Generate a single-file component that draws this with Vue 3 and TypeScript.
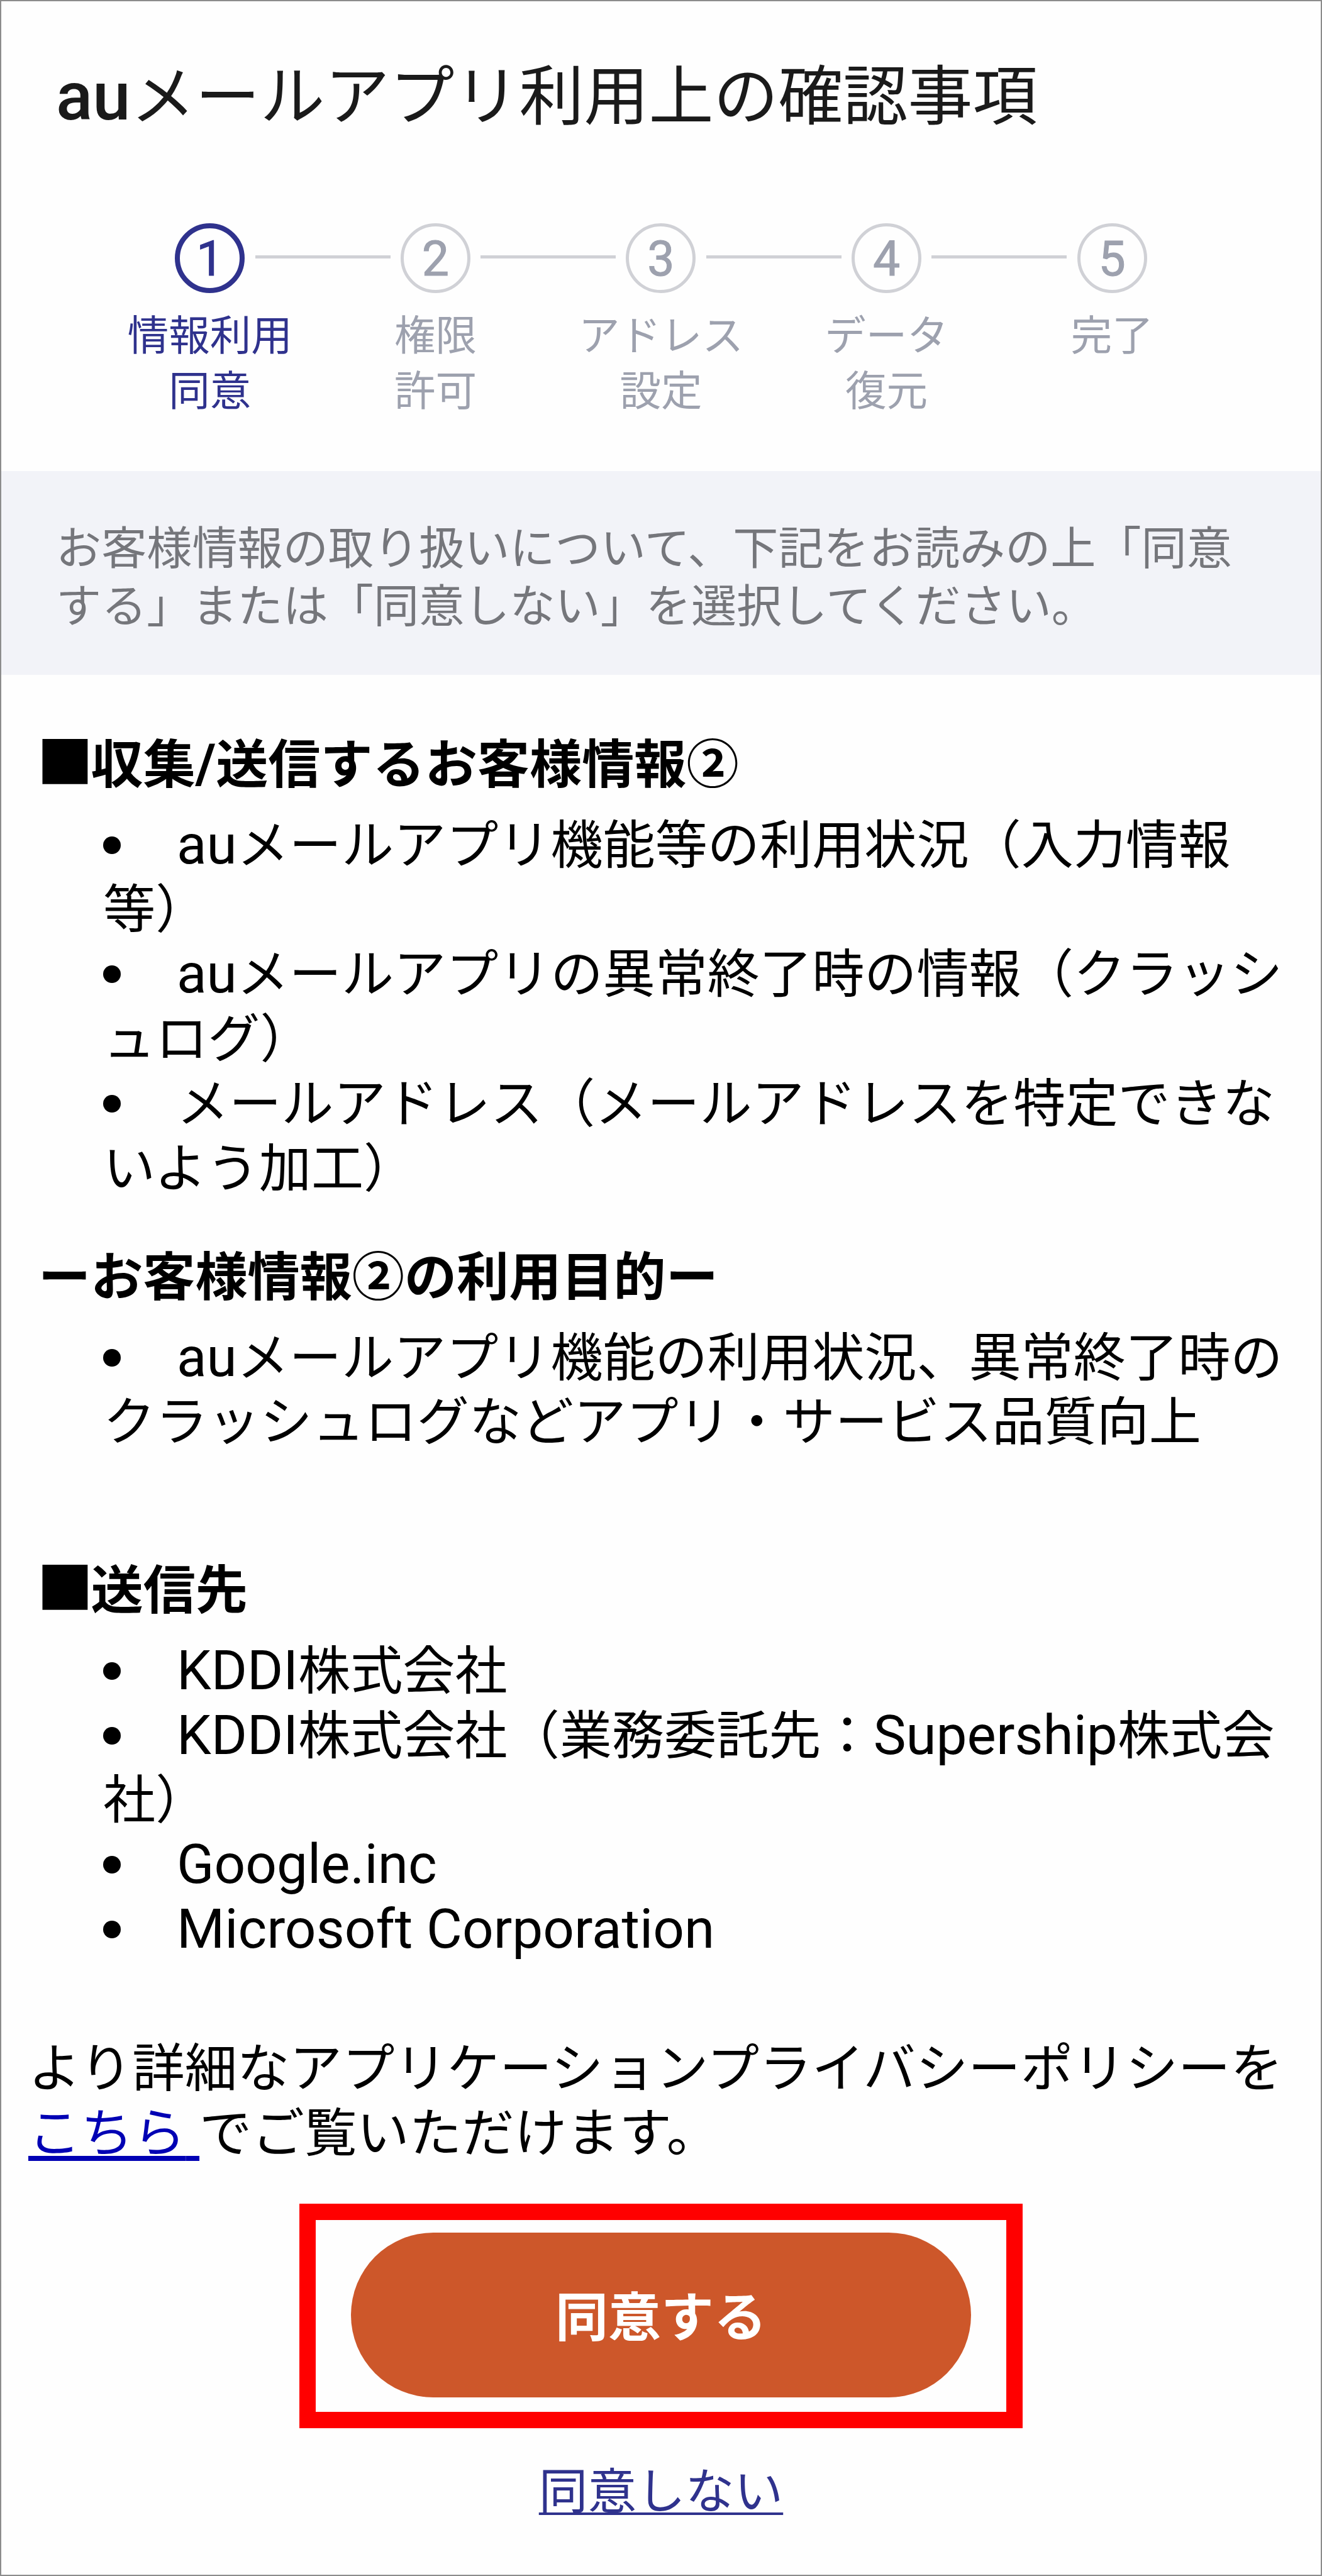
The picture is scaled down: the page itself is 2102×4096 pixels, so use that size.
<script setup lang="ts">
type Run = { text: string; kind?: 'latin' | 'square' }
type Line = Run[]

const title: Line = [{ text: 'au', kind: 'latin' }, { text: 'メールアプリ利用上の確認事項' }]

const steps: { no: number; label: string[] }[] = [
  { no: 1, label: ['情報利用', '同意'] },
  { no: 2, label: ['権限', '許可'] },
  { no: 3, label: ['アドレス', '設定'] },
  { no: 4, label: ['データ', '復元'] },
  { no: 5, label: ['完了'] },
]

const notice: string[] = [
  'お客様情報の取り扱いについて、下記をお読みの上「同意',
  'する」または「同意しない」を選択してください。',
]

const au: Run = { text: 'au', kind: 'latin' }
const kddi: Run = { text: 'KDDI', kind: 'latin' }
const square: Run = { text: '■', kind: 'square' }

const sections: { id: string; heading: Line; items: Line[][] }[] = [
  {
    id: 'collect',
    heading: [square, { text: '収集' }, { text: '/', kind: 'latin' }, { text: '送信するお客様情報②' }],
    items: [
      [[au, { text: 'メールアプリ機能等の利用状況（入力情報' }], [{ text: '等）' }]],
      [[au, { text: 'メールアプリの異常終了時の情報（クラッシ' }], [{ text: 'ュログ）' }]],
      [[{ text: 'メールアドレス（メールアドレスを特定できな' }], [{ text: 'いよう加工）' }]],
    ],
  },
  {
    id: 'purpose',
    heading: [{ text: 'ーお客様情報②の利用目的ー' }],
    items: [
      [
        [au, { text: 'メールアプリ機能の利用状況、異常終了時の' }],
        [{ text: 'クラッシュログなどアプリ・サービス品質向上' }],
      ],
    ],
  },
  {
    id: 'dest',
    heading: [square, { text: '送信先' }],
    items: [
      [[kddi, { text: '株式会社' }]],
      [
        [kddi, { text: '株式会社（業務委託先：' }, { text: 'Supership', kind: 'latin' }, { text: '株式会' }],
        [{ text: '社）' }],
      ],
      [[{ text: 'Google.inc', kind: 'latin' }]],
      [[{ text: 'Microsoft Corporation', kind: 'latin' }]],
    ],
  },
]
</script>

<template>
  <main class="screen">
    <h1 class="title">
      <span v-for="(r, i) in title" :key="i" :class="r.kind">{{ r.text }}</span>
    </h1>

    <ol class="steps">
      <li v-for="s in steps" :key="s.no" class="step" :class="{ active: s.no === 1 }">
        <div class="rail">
          <span class="line" :class="{ hidden: s.no === 1 }"></span>
          <span class="circle">{{ s.no }}</span>
          <span class="line" :class="{ hidden: s.no === steps.length }"></span>
        </div>
        <div class="label">
          <div v-for="l in s.label" :key="l">{{ l }}</div>
        </div>
      </li>
    </ol>

    <div class="notice">
      <div v-for="l in notice" :key="l">{{ l }}</div>
    </div>

    <section v-for="sec in sections" :key="sec.id" class="section" :class="sec.id">
      <h2 class="heading">
        <span v-for="(r, i) in sec.heading" :key="i" :class="r.kind">{{ r.text }}</span>
      </h2>
      <ul class="list">
        <li v-for="(item, n) in sec.items" :key="n">
          <div v-for="(line, k) in item" :key="k" class="row">
            <span v-if="k === 0" class="bullet"></span>
            <span v-for="(r, i) in line" :key="i" :class="r.kind">{{ r.text }}</span>
          </div>
        </li>
      </ul>
    </section>

    <p class="policy">
      より詳細なアプリケーションプライバシーポリシーを<br />
      <a class="here">こちら<span class="latin">&nbsp;</span></a>でご覧いただけます。
    </p>

    <div class="frame">
      <button class="agree" type="button">同意する</button>
    </div>
    <a class="decline">同意しない</a>
  </main>
</template>

<style>
body {
  margin: 0;
  background: #fefefe;
}
</style>

<style scoped>
.screen {
  box-sizing: border-box;
  width: 2102px;
  height: 4096px;
  overflow: hidden;
  border: 2px solid #8c8c8c;
  background: #fefefe;
  color: #000;
  font-family: Roboto, 'Noto Sans CJK JP', sans-serif;
  font-size: 83.15px;
  line-height: 103px;
  white-space: nowrap;
  display: flex;
  flex-direction: column;
}
.latin {
  font-size: 1.05em;
  line-height: 0;
}
.square {
  font-size: 1.08em;
  line-height: 0;
  margin-left: -2.5px;
  margin-right: calc(2.5px - 0.07em);
}
.title {
  margin: 88px 0 0 87px;
  height: 130px;
  line-height: 130px;
  font-size: 103px;
  font-weight: 400;
  color: #1a1a1a;
}
.title .latin {
  font-weight: 500;
}
.steps {
  list-style: none;
  display: flex;
  margin: 135px 0 0 152.5px;
  padding: 0;
  height: 393.5px;
}
.step {
  width: 358.6px;
  color: #9da1ae;
}
.rail {
  display: flex;
  align-items: center;
  justify-content: space-between;
  height: 111px;
}
.line {
  width: 107.5px;
  height: 5px;
  margin-top: -5px;
  background: #d0d1d6;
}
.line.hidden {
  visibility: hidden;
}
.circle {
  box-sizing: border-box;
  width: 111px;
  height: 111px;
  border: 5px solid #d0d1d6;
  border-radius: 50%;
  font-size: 77px;
  -webkit-text-stroke: 1px currentColor;
  line-height: 104px;
  text-align: center;
}
.label {
  margin-top: 25px;
  font-size: 65.5px;
  line-height: 88px;
  text-align: center;
}
.active {
  color: #2f328d;
}
.active .circle {
  border: 8px solid #2f328d;
  line-height: 98px;
}
.notice {
  box-sizing: border-box;
  height: 324.5px;
  padding: 78px 0 0 87px;
  background: #f2f3f8;
  color: #75767b;
  font-size: 72.15px;
  line-height: 92px;
}
.heading {
  margin: 0 0 0 59px;
  font-size: 83.15px;
  font-weight: 700;
}
.collect {
  margin-top: 91.5px;
}
.purpose {
  margin-top: 70px;
}
.dest {
  margin-top: 164.5px;
}
.list {
  list-style: none;
  margin: 25px 0 0 162px;
  padding: 0;
}
.row {
  height: 102.85px;
}
.bullet {
  display: inline-block;
  width: 28px;
  height: 28px;
  margin-right: 89px;
  border-radius: 50%;
  background: #000;
  vertical-align: 15px;
}
.policy {
  margin: 118px 0 0 43px;
  font-size: 83.45px;
}
.here {
  color: #0000b4;
  text-decoration: underline;
  text-decoration-thickness: 8px;
  text-underline-offset: 7px;
  text-decoration-skip-ink: none;
}
.frame {
  box-sizing: border-box;
  align-self: center;
  width: 1150px;
  height: 357px;
  margin-top: 60.3px;
  border: 26px solid #f00;
  display: flex;
  justify-content: center;
  align-items: center;
}
.agree {
  width: 986px;
  height: 262px;
  margin-top: -3px;
  padding: 11px 0 0;
  border: 0;
  border-radius: 131px;
  background: #cd572a;
  color: #fff;
  font: 700 84px/110px Roboto, 'Noto Sans CJK JP', sans-serif;
}
.decline {
  align-self: center;
  margin-top: 50px;
  color: #2f328d;
  font-size: 77.7px;
  text-decoration: underline;
  text-decoration-thickness: 4px;
  text-underline-offset: 6px;
  text-decoration-skip-ink: none;
}
</style>
